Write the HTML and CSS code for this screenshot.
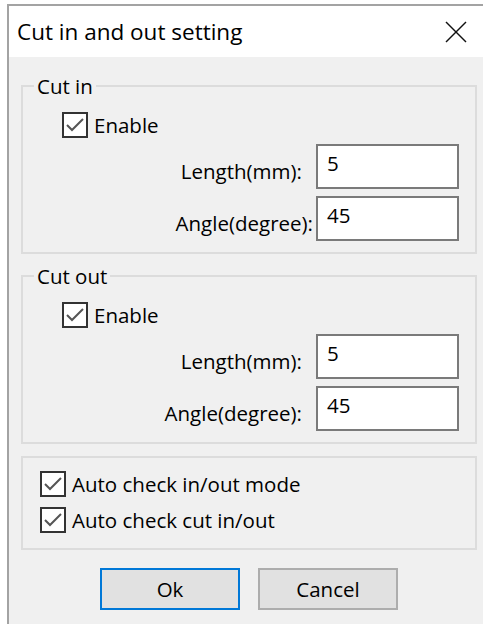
FILE: index.html
```html
<!DOCTYPE html>
<html lang="en">
<head>
<meta charset="utf-8">
<title>Cut in and out setting</title>
<link rel="stylesheet" href="styles.css">
</head>
<body>
<div class="window">
  <div class="titlebar">
    <span class="title">Cut in and out setting</span>
    <svg class="close" width="22" height="22" viewBox="0 0 22 22" aria-label="Close">
      <line x1="1" y1="1" x2="21" y2="21"/>
      <line x1="21" y1="1" x2="1" y2="21"/>
    </svg>
  </div>
  <div class="panel">
    <fieldset class="group">
      <legend>Cut in</legend>
      <div class="group-body">
        <label class="check indent">
          <svg class="box" width="26" height="26" viewBox="0 0 26 26"><rect x="1" y="1" width="24" height="24"/><polyline points="5,13 10,18 21,7"/></svg>
          <span>Enable</span>
        </label>
        <div class="fields">
          <div class="field"><span class="field-label">Length(mm):</span><div class="input">5</div></div>
          <div class="field"><span class="field-label wide">Angle(degree):</span><div class="input">45</div></div>
        </div>
      </div>
    </fieldset>
    <fieldset class="group">
      <legend>Cut out</legend>
      <div class="group-body">
        <label class="check indent">
          <svg class="box" width="26" height="26" viewBox="0 0 26 26"><rect x="1" y="1" width="24" height="24"/><polyline points="5,13 10,18 21,7"/></svg>
          <span>Enable</span>
        </label>
        <div class="fields">
          <div class="field"><span class="field-label">Length(mm):</span><div class="input">5</div></div>
          <div class="field"><span class="field-label">Angle(degree):</span><div class="input">45</div></div>
        </div>
      </div>
    </fieldset>
    <div class="group plain">
      <label class="check">
        <svg class="box" width="26" height="26" viewBox="0 0 26 26"><rect x="1" y="1" width="24" height="24"/><polyline points="5,13 10,18 21,7"/></svg>
        <span>Auto check in/out mode</span>
      </label>
      <label class="check">
        <svg class="box" width="26" height="26" viewBox="0 0 26 26"><rect x="1" y="1" width="24" height="24"/><polyline points="5,13 10,18 21,7"/></svg>
        <span>Auto check cut in/out</span>
      </label>
    </div>
    <div class="buttons">
      <button class="btn default">Ok</button>
      <button class="btn">Cancel</button>
    </div>
  </div>
</div>
</body>
</html>
```

FILE: styles.css
```css
html, body {
  margin: 0;
  height: 100%;
  background: #ffffff;
  overflow: hidden;
}

body {
  font-family: "Open Sans", "Noto Sans", sans-serif;
  font-size: 20.5px;
  color: #000;
}

.window {
  margin: 4px 0 0 7px;
  border-top: 2px solid #a3a3a3;
  border-left: 2px solid #a3a3a3;
  height: calc(100% - 4px);
  box-sizing: border-box;
  display: flex;
  flex-direction: column;
}

.titlebar {
  height: 51px;
  flex: none;
  display: flex;
  align-items: center;
  justify-content: space-between;
  padding: 0 16px 0 8px;
  background: #fff;
}

.title {
  font-size: 22.5px;
}

.close {
  stroke: #111;
  stroke-width: 1.5;
  fill: none;
}

.panel {
  flex: 1;
  background: #f0f0f0;
  padding: 17px 6px 0 12px;
}

.group {
  margin: 0 0 10px;
  padding: 0;
  border: 2px solid #dcdcdc;
  min-width: 0;
}

.group legend {
  margin-left: 11px;
  padding: 0 3px;
  line-height: 24px;
}

.group-body {
  padding: 14px 16px 11px 0;
  display: flex;
  flex-direction: column;
  gap: 6px;
}

.check {
  display: flex;
  align-items: center;
  gap: 6px;
  height: 26px;
}

.check.indent {
  margin-left: 39px;
}

.box {
  flex: none;
}

.box rect {
  fill: #fff;
  stroke: #333;
  stroke-width: 2;
}

.box polyline {
  fill: none;
  stroke: #555;
  stroke-width: 2;
}

.fields {
  display: flex;
  flex-direction: column;
  gap: 7px;
}

.field {
  display: flex;
  justify-content: flex-end;
  align-items: center;
  gap: 14px;
}

.field-label {
  padding-top: 8px;
}

.field-label.wide {
  margin-right: -11px;
}

.input {
  width: 143px;
  height: 45px;
  box-sizing: border-box;
  border: 2px solid #7a7a7a;
  background: #fff;
  padding: 4px 9px;
  line-height: 26px;
}

.group.plain {
  margin-top: 12px;
  padding: 13px 0 15px 17px;
  display: flex;
  flex-direction: column;
  gap: 10px;
}

.buttons {
  display: flex;
  justify-content: center;
  gap: 18px;
  margin-top: 18px;
}

.btn {
  width: 140px;
  height: 42px;
  font: inherit;
  color: #000;
  background: #e1e1e1;
  border: 2px solid #adadad;
  padding: 0;
}

.btn.default {
  border-color: #0078d7;
}
```
